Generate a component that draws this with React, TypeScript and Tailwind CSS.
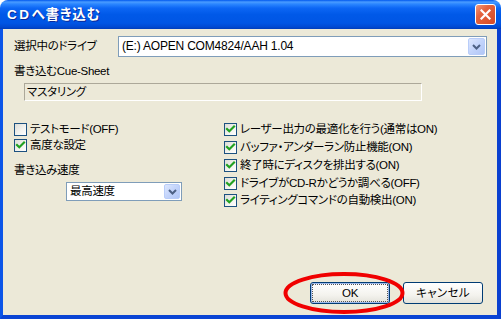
import React from "react";

const FONT = "[font-family:'Liberation_Sans','Noto_Sans_CJK_JP',sans-serif] [font-feature-settings:'palt']";
const TXT = "text-[11.5px] leading-[15px] tracking-[-0.3px]";

function Check({ checked }: { checked: boolean }) {
  return (
    <span className="w-[13px] h-[13px] shrink-0 border border-[#1C5180] bg-[linear-gradient(135deg,#DCDCD7_0%,#F4F4F0_60%,#FFFFFF_100%)] flex items-center justify-center">
      {checked && (
        <svg width="11" height="11" viewBox="0 0 11 11">
          <path d="M2 5 L4.3 7.3 L9 2.6" stroke="#21A121" strokeWidth="2.2" fill="none" strokeLinecap="square" />
        </svg>
      )}
    </span>
  );
}

function DropBtn({ size }: { size: string }) {
  return (
    <span className={`${size} shrink-0 rounded-[2px] border border-[#B9CDF9] bg-[linear-gradient(135deg,#DDE7FE_0%,#C3D4FB_50%,#B1C6F6_100%)] flex items-center justify-center`}>
      <svg width="9" height="6" viewBox="0 0 9 6">
        <path d="M1 1 L4.5 4.5 L8 1" stroke="#4D6185" strokeWidth="2" fill="none" />
      </svg>
    </span>
  );
}

function CheckRow({ checked, label, h }: { checked: boolean; label: string; h: string }) {
  return (
    <div className={`flex items-center ${h}`}>
      <Check checked={checked} />
      <span className={`ml-[3px] ${TXT} whitespace-nowrap`}>{label}</span>
    </div>
  );
}

export default function App() {
  return (
    <div className={`relative w-[501px] h-[319px] bg-white text-black ${FONT}`}>
      <div className="w-[501px] h-[319px] flex flex-col rounded-t-[8px] overflow-hidden">
        {/* Title bar */}
        <div className="h-[29px] shrink-0 flex items-center justify-between pl-[7px] pr-[5px] bg-[linear-gradient(180deg,#0058EE_0%,#4A9CFF_7%,#2B86FF_14%,#0C66F4_28%,#0059E8_50%,#0055E4_80%,#0049D2_93%,#003DBA_100%)]">
          <span className="text-white font-bold text-[13.5px] leading-[16px] [text-shadow:1px_1px_0_#0B2A9A]">
            <span className="tracking-[2.5px]">CD</span>
            <span className="tracking-[0.8px]">へ書き込む</span>
          </span>
          <span className="w-[21px] h-[21px] rounded-[3px] border border-white bg-[linear-gradient(135deg,#F19A7C_0%,#E4633F_35%,#D54A25_100%)] flex items-center justify-center">
            <svg width="11" height="11" viewBox="0 0 11 11">
              <path d="M1.5 1.5 L9.5 9.5 M9.5 1.5 L1.5 9.5" stroke="white" strokeWidth="2.2" strokeLinecap="square" />
            </svg>
          </span>
        </div>
        {/* Body with frame */}
        <div className="flex-1 flex border-l-[3px] border-r-[4px] border-b-[4px] border-l-[#0B55E8] border-r-[#0A40D0] border-b-[#0A44D4]">
          <div className="flex-1 bg-[#ECE9D8] flex flex-col pl-[11px] pt-[7px]">
            {/* Drive row */}
            <div className="flex items-center h-[21px]">
              <span className={`w-[104px] ${TXT}`}>選択中のドライブ</span>
              <div className="w-[369px] h-[21px] border border-[#7F9DB9] bg-white flex items-center pr-[1px]">
                <span className="flex-1 pl-[3px] text-[12px] leading-[15px] tracking-[-0.2px] whitespace-nowrap">(E:) AOPEN COM4824/AAH 1.04</span>
                <DropBtn size="w-[17px] h-[17px]" />
              </div>
            </div>
            <div className={`mt-[7px] h-[15px] ${TXT}`}>書き込むCue-Sheet</div>
            <div className={`mt-[4px] ml-[10px] w-[398px] h-[18px] border border-t-[#ACA899] border-l-[#ACA899] border-b-white border-r-white flex items-center pl-[2px] ${TXT}`}>
              マスタリング
            </div>
            {/* Options */}
            <div className="flex mt-[19px]">
              <div className="w-[210px] flex flex-col pt-[2px]">
                <div className="flex flex-col gap-[1px]">
                  <CheckRow checked={false} label="テストモード(OFF)" h="h-[15px]" />
                  <CheckRow checked={true} label="高度な設定" h="h-[15px]" />
                </div>
                <div className={`mt-[10px] h-[15px] ${TXT}`}>書き込み速度</div>
                <div className="mt-[4px] ml-[52px] w-[116px] h-[19px] border border-[#7F9DB9] bg-white flex items-center pr-[1px]">
                  <span className={`flex-1 pl-[3px] ${TXT}`}>最高速度</span>
                  <DropBtn size="w-[16px] h-[15px]" />
                </div>
              </div>
              <div className="flex flex-col">
                <CheckRow checked={true} label="レーザー出力の最適化を行う(通常はON)" h="h-[18px]" />
                <CheckRow checked={true} label="バッファ・アンダーラン防止機能(ON)" h="h-[18px]" />
                <CheckRow checked={true} label="終了時にディスクを排出する(ON)" h="h-[18px]" />
                <CheckRow checked={true} label="ドライブがCD-Rかどうか調べる(OFF)" h="h-[18px]" />
                <CheckRow checked={true} label="ライティングコマンドの自動検出(ON)" h="h-[16px]" />
              </div>
            </div>
            {/* Buttons */}
            <div className="mt-auto mb-[11px] pr-[14px] flex justify-end gap-[13px]">
              <button className="w-[80px] h-[22px] rounded-[3px] border border-[#003C74] p-[1px] bg-[linear-gradient(180deg,#FFFFFF_0%,#F4F3EE_60%,#E3E2DA_100%)] shadow-[inset_0_0_0_1px_#9DB9EB]">
                <span className={`w-full h-full flex items-center justify-center border border-dotted border-[#555] font-normal ${TXT}`}>
                  OK
                </span>
              </button>
              <button className={`w-[80px] h-[22px] rounded-[3px] border border-[#003C74] bg-[linear-gradient(180deg,#FFFFFF_0%,#F4F3EE_60%,#E3E2DA_100%)] flex items-center justify-center tracking-[0.3px] text-[11.5px] leading-[15px]`}>
                キャンセル
              </button>
            </div>
          </div>
        </div>
      </div>
      {/* Red annotation ellipse */}
      <svg className="absolute left-[282px] top-[271px]" width="124" height="44" viewBox="0 0 124 44">
        <ellipse cx="62" cy="22" rx="58.5" ry="19" stroke="#F00000" strokeWidth="4" fill="none" />
      </svg>
    </div>
  );
}
